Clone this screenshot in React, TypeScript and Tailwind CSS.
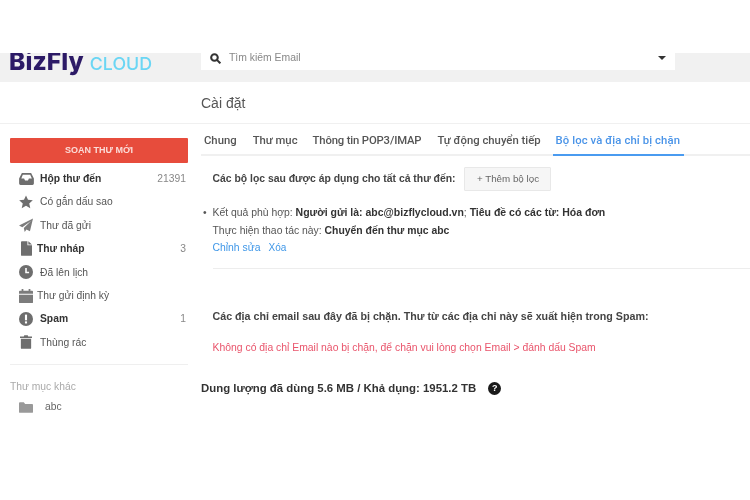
import type { ReactNode } from "react";

const C = "#6e6e6e";

const InboxIcon = () => (
  <svg viewBox="0 0 16 13" className="w-[15px] h-[12px]" fill={C}>
    <path d="M3 0h10l3 6v5.5a1.5 1.5 0 0 1-1.5 1.5h-13A1.5 1.5 0 0 1 0 11.5V6zM4 2 2.4 6h3l1 2h3.2l1-2h3.2L12 2z" fillRule="evenodd" />
  </svg>
);
const StarIcon = () => (
  <svg viewBox="0 0 16 16" className="w-[14px] h-[14px]" fill={C}>
    <path d="M8 .5l2.3 5 5.5.6-4.1 3.7 1.2 5.4L8 12.4l-4.9 2.8 1.2-5.4L.2 6.1l5.5-.6z" />
  </svg>
);
const SendIcon = () => (
  <svg viewBox="0 0 16 16" className="w-[14px] h-[14px]" fill="#7c7c7c">
    <path d="M16 .5 12.5 15l-4-2-2 3-1-4.5L14 3 3.8 10.5 0 8.5z" />
  </svg>
);
const FileIcon = () => (
  <svg viewBox="0 0 12 16" className="w-[11px] h-[15px]" fill={C}>
    <path d="M0 1a1 1 0 0 1 1-1h6v4.5h5V15a1 1 0 0 1-1 1H1a1 1 0 0 1-1-1zM8 0l4 3.5H8z" />
  </svg>
);
const ClockIcon = () => (
  <svg viewBox="0 0 16 16" className="w-[14px] h-[14px]">
    <circle cx="8" cy="8" r="8" fill={C} />
    <path d="M8 3.5V8.5H11.5" stroke="#fff" strokeWidth="1.8" fill="none" />
  </svg>
);
const CalIcon = () => (
  <svg viewBox="0 0 16 16" className="w-[14px] h-[14px]" fill="#7c7c7c">
    <path d="M3 0h2v2h6V0h2v2h2a1 1 0 0 1 1 1v2.5H0V3a1 1 0 0 1 1-1h2zM0 6.5h16V15a1 1 0 0 1-1 1H1a1 1 0 0 1-1-1z" />
  </svg>
);
const SpamIcon = () => (
  <svg viewBox="0 0 16 16" className="w-[14px] h-[14px]">
    <circle cx="8" cy="8" r="8" fill={C} />
    <rect x="6.8" y="3" width="2.4" height="6.5" fill="#fff" />
    <rect x="6.8" y="10.7" width="2.4" height="2.4" fill="#fff" />
  </svg>
);
const TrashIcon = () => (
  <svg viewBox="0 0 14 16" className="w-[12px] h-[14px]" fill={C}>
    <path d="M5 0h4l.6 1.5H14V3.2H0V1.5h4.4zM1 4.2h12V15a1 1 0 0 1-1 1H2a1 1 0 0 1-1-1z" />
  </svg>
);
const FolderIcon = () => (
  <svg viewBox="0 0 16 12" className="w-[14px] h-[11px]" fill="#999">
    <path d="M0 1a1 1 0 0 1 1-1h4.5L7 2h8a1 1 0 0 1 1 1v8a1 1 0 0 1-1 1H1a1 1 0 0 1-1-1z" />
  </svg>
);

const Row = ({ icon, label, count, bold, gap = 6 }: { icon: ReactNode; label: string; count?: string; bold?: boolean; gap?: number }) => (
  <div className="flex items-center h-[23.4px] pl-[18px] pr-[15px]">
    <span className="w-[16px] flex justify-center shrink-0">{icon}</span>
    <span className={`text-[10.3px] ${bold ? "font-bold text-[#333]" : "text-[#555]"}`} style={{ marginLeft: gap }}>{label}</span>
    {count && <span className="ml-auto text-[10.3px] text-[#888]">{count}</span>}
  </div>
);

export default function App() {
  return (
    <div className="w-[750px] h-[500px] bg-white overflow-hidden blur-[0.5px] font-['Liberation_Sans',Arial,sans-serif]">
      <div className="h-[53px]" />
      <header className="h-[29px] bg-[#f1f1f1] flex items-start overflow-hidden">
        <div className="w-[201px] pl-[9px] flex items-baseline -mt-[9px] shrink-0 font-['Inter',sans-serif]">
          <span className="text-[24.5px] leading-[34px] font-extrabold text-[#2c1a66] tracking-[0.1px]">BizFly</span>
          <span className="ml-[6px] text-[17.8px] leading-[34px] text-[#6bd6f4] font-medium">CLOUD</span>
        </div>
        <div className="w-[474px] h-[17px] bg-white flex items-center pb-[7px] pl-[9px] pr-[9px]">
          <svg viewBox="0 0 16 16" className="w-[11px] h-[11px] shrink-0" fill="none" stroke="#333" strokeWidth="3">
            <circle cx="6.5" cy="6.5" r="4.8" />
            <path d="M10 10l5 5" />
          </svg>
          <span className="ml-[8px] text-[10.4px] text-[#888]">Tìm kiếm Email</span>
          <span className="ml-auto w-0 h-0 border-x-[4.5px] border-x-transparent border-t-[4.5px] border-t-[#333]" />
        </div>
      </header>

      <div className="h-[42px] flex items-center pl-[201px] pt-[2px] border-b border-[#f0f0f0]">
        <h1 className="text-[14px] text-[#555]">Cài đặt</h1>
      </div>

      <div className="flex">
        <aside className="w-[201px] shrink-0 pt-[14px]">
          <div className="mx-[10px] w-[178px] h-[25px] bg-[#e74c3c] rounded-[1px] flex items-center justify-center text-[9px] font-bold text-[#fbdcd8]">
            SOẠN THƯ MỚI
          </div>
          <div className="mt-[4px]">
            <Row icon={<InboxIcon />} label="Hộp thư đến" count="21391" bold />
            <Row icon={<StarIcon />} label="Có gắn dấu sao" />
            <Row icon={<SendIcon />} label="Thư đã gửi" />
            <Row icon={<FileIcon />} label="Thư nháp" count="3" bold gap={3} />
            <Row icon={<ClockIcon />} label="Đã lên lịch" />
            <Row icon={<CalIcon />} label="Thư gửi định kỳ" gap={3} />
            <Row icon={<SpamIcon />} label="Spam" count="1" bold />
            <Row icon={<TrashIcon />} label="Thùng rác" />
          </div>
          <div className="mx-[10px] w-[178px] mt-[10px] border-t border-[#efefef]" />
          <div className="ml-[10px] mt-[16px] text-[10.3px] leading-[12px] text-[#aaa]">Thư mục khác</div>
          <div className="flex items-center pl-[19px] mt-[7px] h-[14px]">
            <FolderIcon />
            <span className="ml-[12px] text-[10.3px] text-[#666]">abc</span>
          </div>
        </aside>

        <main className="flex-1 min-w-0">
          <nav className="h-[32px] flex items-end border-b-2 border-[#f0f0f0] text-[11.3px] text-[#555] font-medium font-['Roboto',sans-serif]">
            <span className="ml-[3px] pb-[4px]">Chung</span>
            <span className="ml-[16px] pb-[4px]">Thư mục</span>
            <span className="ml-[15px] pb-[4px] tracking-[-0.15px]">Thông tin POP3/IMAP</span>
            <span className="ml-[16px] pb-[4px]">Tự động chuyển tiếp</span>
            <span className="ml-[12px] pl-[3px] pr-[4px] pb-[4px] -mb-[2px] border-b-2 border-[#4a9bf0] text-[#4a94e8] tracking-[0.1px]">Bộ lọc và địa chỉ bị chặn</span>
          </nav>

          <div className="pl-[11.5px]">
            <div className="flex items-center mt-[11px]">
              <span className="text-[10.4px] font-bold text-[#444]">Các bộ lọc sau được áp dụng cho tất cả thư đến:</span>
              <button className="ml-[9px] w-[87px] h-[24px] bg-[#f6f6f6] border border-[#e8e8e8] rounded-[1px] text-[9.8px] text-[#666]">+ Thêm bộ lọc</button>
            </div>
            <div className="mt-[13px] text-[10.4px] leading-[17.5px] text-[#555]">
              <div className="-ml-[9.5px] flex">
                <span className="w-[9.5px] text-left">•</span>
                <span>Kết quả phù hợp: <b className="text-[#333] text-[10.5px]">Người gửi là: abc@bizflycloud.vn</b>; <b className="text-[#333] text-[10.5px]">Tiêu đề có các từ: Hóa đơn</b></span>
              </div>
              <div>Thực hiện thao tác này: <b className="text-[#333]">Chuyển đến thư mục abc</b></div>
              <div className="text-[#3f97e8]"><span>Chỉnh sửa</span><span className="ml-[8px] text-[10px]">Xóa</span></div>
            </div>
            <div className="mt-[11px] border-t border-[#ededed]" />
            <div className="mt-[41px] text-[10.7px] leading-[12px] font-bold text-[#444]">Các địa chỉ email sau đây đã bị chặn. Thư từ các địa chỉ này sẽ xuất hiện trong Spam:</div>
            <div className="mt-[20px] text-[10.4px] leading-[12px] text-[#e9546b]">Không có địa chỉ Email nào bị chặn, để chặn vui lòng chọn Email &gt; đánh dấu Spam</div>
          </div>
          <div className="mt-[28px] flex items-center h-[14px]">
            <span className="text-[11.4px] font-bold text-[#333]">Dung lượng đã dùng 5.6 MB / Khả dụng: 1951.2 TB</span>
            <span className="ml-[12px] w-[13px] h-[13px] rounded-full bg-[#1a1a1a] text-white text-[9px] font-bold flex items-center justify-center">?</span>
          </div>
        </main>
      </div>
    </div>
  );
}
